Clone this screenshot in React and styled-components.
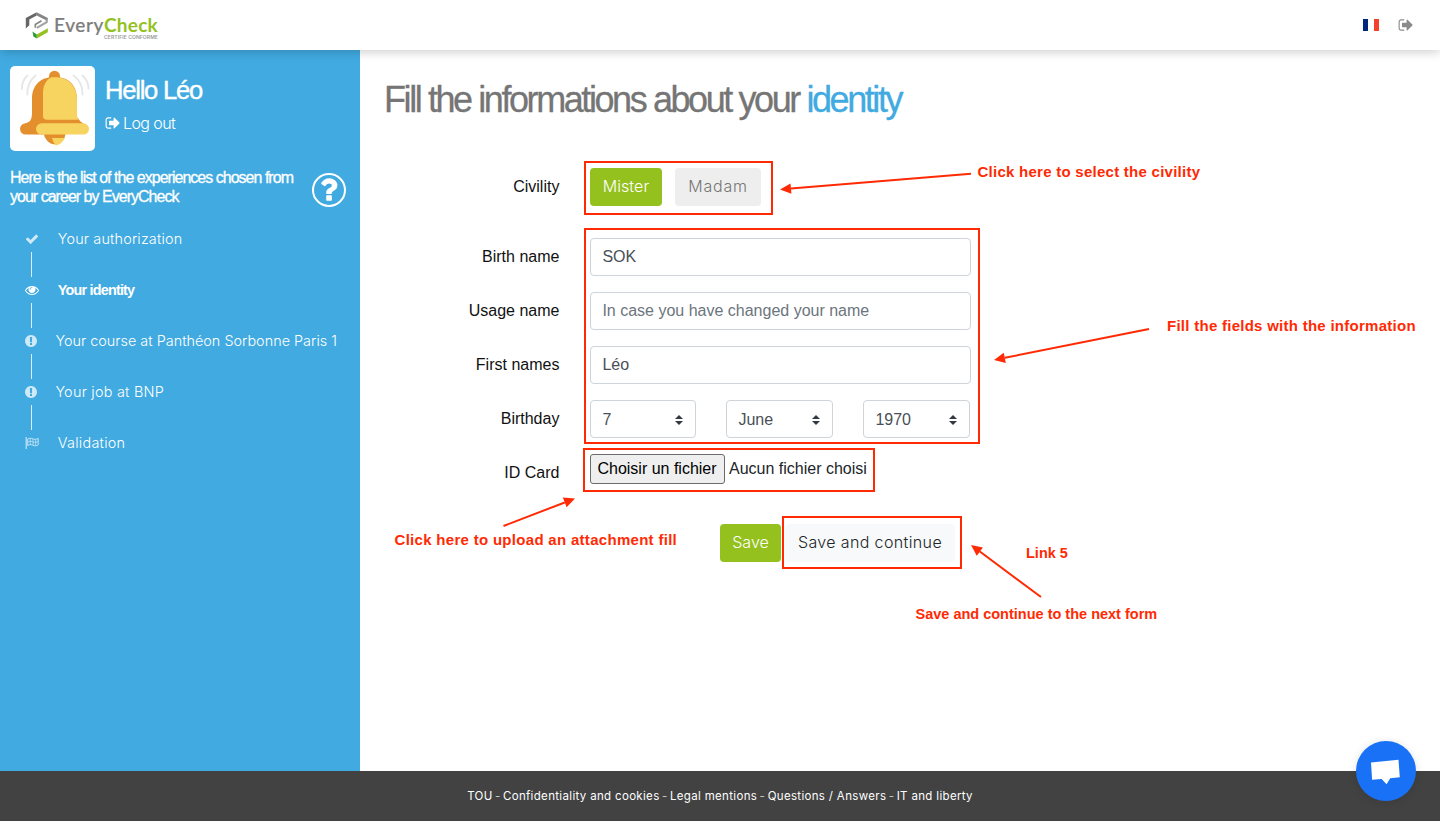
import React from 'react';
import styled, { createGlobalStyle, css } from 'styled-components';

const geo = '"Inter", "Lato", sans-serif';
const helv = '"Liberation Sans", Arial, sans-serif';
const RED = '#ff2a04';

const GlobalStyle = createGlobalStyle`
  *, *::before, *::after { box-sizing: border-box; }
  body { margin: 0; font-family: ${helv}; font-size: 16px; line-height: 1.5; color: #212529; background: #fff; }
  h1, h2, p, ul { margin: 0; padding: 0; }
`;

const Page = styled.div`
  position: relative;
  display: flex;
  flex-direction: column;
  width: 1440px;
  height: 821px;
  overflow: hidden;
`;

const Header = styled.header`
  position: relative;
  z-index: 2;
  flex: 0 0 50px;
  display: flex;
  align-items: center;
  justify-content: space-between;
  padding: 0 26px 0 25px;
  background: #fff;
  box-shadow: 0 2px 10px rgba(0, 0, 0, 0.2);
`;

const Logo = styled.div`
  display: flex;
  gap: 6px;
  padding-top: 1px;
`;

const LogoText = styled.div`
  display: flex;
  flex-direction: column;
  padding-top: 3px;
`;

const LogoName = styled.span`
  font: 500 19px/20px "Lato", sans-serif;
  letter-spacing: 0.6px;
  color: #7d7d7d;
  -webkit-text-stroke: 0.2px #7d7d7d;
  white-space: nowrap;
  b {
    font-weight: 700;
    letter-spacing: 0.25px;
    color: #95c11f;
    -webkit-text-stroke: 0;
  }
`;

const LogoTag = styled.span`
  font: 600 5px/5px ${geo};
  letter-spacing: 0.1px;
  margin-left: 50px;
  color: #9a9a9a;
  white-space: nowrap;
`;

const HeaderTools = styled.div`
  display: flex;
  align-items: center;
  gap: 19px;
  color: #8a8a8a;
`;

const Flag = styled.span`
  width: 16px;
  height: 12px;
  background: linear-gradient(90deg, #00267f 0 5px, #fff 5px 11px, #f3412e 11px);
`;

const Body = styled.div`
  flex: 1;
  display: flex;
`;

const Sidebar = styled.aside`
  width: 360px;
  padding: 16px 10px 0;
  background: #41aae1;
  color: #fff;
`;

const Profile = styled.div`
  display: flex;
  gap: 10px;
`;

const Avatar = styled.div`
  width: 85px;
  height: 85px;
  border-radius: 5px;
  background: #fff;
`;

const Greeting = styled.div`
  display: flex;
  flex-direction: column;
  padding-top: 8px;
`;

const Hello = styled.h2`
  font: 400 25.6px/32px ${helv};
  letter-spacing: -1.25px;
  -webkit-text-stroke: 0.4px #fff;
`;

const LogOut = styled.span`
  display: flex;
  align-items: center;
  gap: 2px;
  margin-top: 5px;
  font: 300 16px/24px ${geo};
  letter-spacing: -0.6px;
`;

const Intro = styled.div`
  display: flex;
  justify-content: space-between;
  margin-top: 17px;
  padding-right: 3px;
  svg { margin-top: 4px; }
`;

const IntroText = styled.p`
  font-size: 16px;
  line-height: 19px;
  letter-spacing: -0.98px;
  white-space: nowrap;
  -webkit-text-stroke: 0.3px #fff;
`;

const Steps = styled.ul`
  list-style: none;
  margin-top: 20px;
`;

const Step = styled.li`
  position: relative;
  display: flex;
  align-items: center;
  height: 22px;
  margin-bottom: 29px;
  padding-left: ${p => (p.$narrow ? 14 : 15)}px;
  font: 300 14.4px/22px ${geo};
  letter-spacing: ${p => p.$ls || 0}px;
  white-space: nowrap;
  svg { flex: none; opacity: 0.75; margin-right: ${p => (p.$narrow ? 17.4 : 18.8)}px; }
  ${p => p.$active && css`
    font-family: ${helv};
    font-weight: 700;
    svg { opacity: 1; }
  `}
  &:not(:last-child)::after {
    content: '';
    position: absolute;
    left: 21px;
    top: 24px;
    width: 1px;
    height: 25px;
    background: rgba(255, 255, 255, 0.8);
  }
`;

const Main = styled.main`
  flex: 1;
  padding: 28px 25px 0;
`;

const Title = styled.h1`
  margin-left: -1px;
  font: 400 36px/43px ${helv};
  letter-spacing: -2.42px;
  color: #757575;
  white-space: nowrap;
  -webkit-text-stroke: 0.3px currentColor;
  span { color: #41aae1; }
`;

const Form = styled.div`
  display: grid;
  row-gap: 16px;
  margin-top: 47px;
  width: 586px;
`;

const Row = styled.div`
  display: grid;
  grid-template-columns: 175px 381px;
  column-gap: 30px;
  height: 38px;
  margin-bottom: ${p => p.$after || 0}px;
`;

const Label = styled.label`
  padding-right: 0.6px;
  font-size: 16px;
  line-height: 37px;
  text-align: right;
  color: #111;
`;

const Controls = styled.div`
  display: flex;
  gap: ${p => p.$gap || 0}px;
  padding-right: 1px;
`;

const tones = {
  green: css`background: #95c11f; color: #fff;`,
  gray: css`background: #eee; color: #757575;`,
  light: css`background: #f8f9fa; color: #212529;`,
};

const Button = styled.button`
  width: ${p => p.$w}px;
  height: 38px;
  padding: 0 0 2px;
  border: 0;
  border-radius: 4px;
  font: 300 16px/36px ${geo};
  letter-spacing: ${p => p.$ls || 0}px;
  white-space: nowrap;
  ${p => tones[p.$tone]}
`;

const field = css`
  height: 38px;
  border: 1px solid #ced4da;
  border-radius: 4px;
  background: #fff;
  color: #495057;
  font: 400 16px/24px ${helv};
`;

const Input = styled.input`
  ${field}
  width: 381px;
  padding: 6px 11.4px;
  &::placeholder { color: #6c757d; opacity: 1; }
`;

const Select = styled.div`
  ${field}
  flex: ${p => p.$w ? `0 0 ${p.$w}px` : 1};
  display: flex;
  align-items: center;
  justify-content: space-between;
  padding: 1px 12px 0 11.4px;
`;

const FilePick = styled.div`
  display: flex;
  align-items: flex-start;
  gap: 4px;
  line-height: 30px;
  color: #212529;
  white-space: nowrap;
`;

const FileButton = styled.button`
  width: 135px;
  height: 30px;
  padding: 0 1px 0 0;
  border: 1px solid #6b6b6b;
  border-radius: 3px;
  background: #efefef;
  font: 400 16px/26px ${helv};
  color: #000;
`;

const Actions = styled.div`
  display: flex;
  gap: 4px;
  margin: 32px 0 0 335px;
`;

const Footer = styled.footer`
  flex: 0 0 50px;
  display: flex;
  align-items: center;
  justify-content: center;
  gap: 2.4px;
  background: #424242;
  color: #fff;
  font: 400 11.5px/20px ${geo};
  letter-spacing: 0.33px;
  i { font-style: normal; opacity: 0.7; }
`;

const Chat = styled.div`
  position: absolute;
  z-index: 3;
  right: 24px;
  bottom: 20px;
  width: 60px;
  height: 60px;
  border-radius: 50%;
  background: #1972f5;
  box-shadow: 0 1px 8px rgba(0, 0, 0, 0.12);
`;

const Overlay = styled.div`
  position: absolute;
  inset: 0;
  z-index: 4;
  pointer-events: none;
`;

const Frame = styled.div`
  position: absolute;
  left: ${p => p.$x}px;
  top: ${p => p.$y}px;
  width: ${p => p.$w}px;
  height: ${p => p.$h}px;
  border: 2px solid ${RED};
`;

const Note = styled.span`
  position: absolute;
  left: ${p => p.$x}px;
  top: ${p => p.$y}px;
  font: 700 ${p => p.$size || 15}px/18px ${helv};
  letter-spacing: ${p => p.$ls || 0}px;
  color: ${RED};
  white-space: nowrap;
`;

const Arrows = styled.svg`
  position: absolute;
  inset: 0;
`;

const paths = {
  signOut: 'M704 1440q0 4 1 20t.5 26.5-3 23.5-10 19.5-20.5 6.5h-320q-119 0-203.5-84.5t-84.5-203.5v-704q0-119 84.5-203.5t203.5-84.5h320q13 0 22.5 9.5t9.5 22.5q0 4 1 20t.5 26.5-3 23.5-10 19.5-20.5 6.5h-320q-66 0-113 47t-47 113v704q0 66 47 113t113 47h312l11.5 1 11.5 3 8 5.5 7 9 2 13.5zm928-544q0 26-19 45l-544 544q-19 19-45 19t-45-19-19-45v-288h-448q-26 0-45-19t-19-45v-384q0-26 19-45t45-19h448v-288q0-26 19-45t45-19 45 19l544 544q19 19 19 45z',
  check: 'M1671 566q0 40-28 68l-724 724-136 136q-28 28-68 28t-68-28l-136-136-362-362q-28-28-28-68t28-68l136-136q28-28 68-28t68 28l294 295 656-657q28-28 68-28t68 28l136 136q28 28 28 68z',
  eye: 'M1664 960q-152-236-381-353 61 104 61 225 0 185-131.5 316.5t-316.5 131.5-316.5-131.5-131.5-316.5q0-121 61-225-229 117-381 353 133 205 333.5 326.5t434.5 121.5 434.5-121.5 333.5-326.5zm-720-384q0-20-14-34t-34-14q-125 0-214.5 89.5t-89.5 214.5q0 20 14 34t34 14 34-14 14-34q0-86 61-147t147-61q20 0 34-14t14-34zm848 384q0 34-20 69-140 230-376.5 368.5t-499.5 138.5-499.5-139-376.5-368q-20-35-20-69t20-69q140-229 376.5-368t499.5-139 499.5 139 376.5 368q20 35 20 69z',
  alert: 'M896 128q209 0 385.5 103t279.5 279.5 103 385.5-103 385.5-279.5 279.5-385.5 103-385.5-103-279.5-279.5-103-385.5 103-385.5 279.5-279.5 385.5-103zm128 1247v-190q0-14-9-23.5t-22-9.5h-192q-13 0-23 10t-10 23v190q0 13 10 23t23 10h192q13 0 22-9.5t9-23.5zm-2-344l18-621q0-12-10-18-10-8-24-8h-220q-14 0-24 8-10 6-10 18l17 621q0 10 10 17.5t24 7.5h185q14 0 23.5-7.5t10.5-17.5z',
  question: 'M1088 1256v240q0 16-12 28t-28 12h-240q-16 0-28-12t-12-28v-240q0-16 12-28t28-12h240q16 0 28 12t12 28zm316-600q0 54-15.5 101t-35 76.5-55 59.5-57.5 43.5-61 35.5q-41 23-68.5 65t-27.5 67q0 17-12 32.5t-28 15.5h-240q-15 0-25.5-18.5t-10.5-37.5v-45q0-83 65-156.5t143-108.5q59-27 84-56t25-76q0-42-46.5-74t-107.5-32q-65 0-108 29-35 25-107 115-13 16-31 16-12 0-25-8l-164-125q-13-10-15.5-25t5.5-28q160-266 464-266 80 0 161 31t146 83 106 127.5 41 158.5z',
};

const Icon = ({ name, size = 14 }) => (
  <svg width={size} height={size} viewBox="0 0 1792 1792" fill="currentColor"><path d={paths[name]} /></svg>
);

const FlagIcon = () => (
  <svg width="14" height="14" viewBox="0 0 14 14" fill="none" stroke="currentColor">
    <path d="M1.2 1v12" strokeWidth="1.1" />
    <path d="M2.7 3.1c2-1.1 3.4-1 5.2-.2 1.9.8 3.4.5 5.3-.5v6.5c-1.9 1-3.4 1.2-5.3.3-1.8-.8-3.2-.8-5.2.3z" strokeWidth="0.9" />
    <path d="M2.7 6.1c2-1.1 3.4-1 5.2-.2 1.9.8 3.4.5 5.3-.5M5.3 2.300v6.5M8 3v6M10.7 3.400v6.200" strokeWidth="0.7" />
  </svg>
);

const LogoMark = () => (
  <svg width="23" height="27" viewBox="0 0 23 27">
    <path d="M.8 5.900 11.700.2v3.300L4.300 7.500v5.800L.8 16.500z" fill="#666" />
    <path d="M11.700.2 22.800 6v2.200L20.500 8 11.700 3.500z" fill="#858585" />
    <path d="M21.700 7.200v2.900L11.800 15.900" fill="none" stroke="#a3a3a3" strokeWidth="2.200" />
    <path d="M10.300 15.800v-3.300l6.200-3.700" fill="none" stroke="#858585" strokeWidth="1.600" />
    <path d="m7.500 19.500 4.300 3v3.900l-3.400-1.800z" fill="#2f9a3a" />
    <path d="M11.800 22.500 22.800 16.200v4L11.800 26.400z" fill="#95c11f" />
  </svg>
);

const Bell = () => (
  <svg width="85" height="85" viewBox="0 0 85 85">
    <g fill="none" stroke="#e6e6e6" strokeWidth="1.800" strokeLinecap="round">
      <path d="M17.500 9.500Q11.500 15 12 23M25.500 9.500Q17 16.500 17.300 28.500M72.500 9.500Q78.500 15 78.500 22.500M63.500 9.500Q73 16.500 72.500 28.500" />
    </g>
    <path d="M39 12V10.200a5.500 5.500 0 0 1 11 0V12z" fill="#e48f2e" />
    <path d="M33.500 66a11.300 13.700 0 0 0 22.500 0z" fill="#e48f2e" />
    <path d="M42 72h13q-4 7-9 7.500-3-2.500-4-7.500z" fill="#f7d460" />
    <path d="M22 48V33c0-13 8-21.700 20-21.700h5c12 0 20 9 20 21.700v18l3.500 4.500L74 58H15l5-3q2-3 2-7z" fill="#e48f2e" />
    <path d="M33 50V28c0-9 3.500-14.500 8.500-16.700h4C58 11.300 67 20 67 34v16q.3 3 1.500 3.800H37q-4 0-4-3.800z" fill="#f7d460" />
    <rect x="10" y="57.300" width="40" height="11.300" rx="5.600" fill="#e48f2e" />
    <rect x="26" y="57.300" width="53" height="11.300" rx="5.600" fill="#f7d460" />
  </svg>
);

const Caret = () => (
  <svg width="8" height="10" viewBox="0 0 4 5" fill="#343a40"><path d="M2 0 0 2h4zm0 5L0 3h4z" /></svg>
);

const Arrow = ({ from: [x1, y1], to: [x2, y2] }) => {
  const len = Math.hypot(x2 - x1, y2 - y1);
  const ux = (x2 - x1) / len;
  const uy = (y2 - y1) / len;
  const bx = x2 - ux * 11;
  const by = y2 - uy * 11;
  return (
    <g>
      <line x1={x1} y1={y1} x2={bx} y2={by} stroke={RED} strokeWidth="2" />
      <polygon points={`${x2},${y2} ${bx - uy * 5.2},${by + ux * 5.2} ${bx + uy * 5.2},${by - ux * 5.2}`} fill={RED} />
    </g>
  );
};

const links = ['TOU', 'Confidentiality and cookies', 'Legal mentions', 'Questions / Answers', 'IT and liberty'];

export default function App() {
  return (
    <Page>
      <GlobalStyle />
      <Header>
        <Logo>
          <LogoMark />
          <LogoText>
            <LogoName>Every<b>Check</b></LogoName>
            <LogoTag>CERTIFIE CONFORME</LogoTag>
          </LogoText>
        </Logo>
        <HeaderTools><Flag /><Icon name="signOut" size={16} /></HeaderTools>
      </Header>
      <Body>
        <Sidebar>
          <Profile>
            <Avatar><Bell /></Avatar>
            <Greeting>
              <Hello>Hello Léo</Hello>
              <LogOut><Icon name="signOut" size={16} />Log out</LogOut>
            </Greeting>
          </Profile>
          <Intro>
            <IntroText>Here is the list of the experiences chosen from<br />your career by EveryCheck</IntroText>
            <svg width="36" height="36" viewBox="0 0 36 36" fill="none">
              <circle cx="18" cy="18" r="16" stroke="#fff" strokeWidth="2" />
              <g transform="translate(1.700 1.800) scale(.0176)"><path d={paths.question} fill="#fff" /></g>
            </svg>
          </Intro>
          <Steps>
            <Step $ls={0.17}><Icon name="check" />Your authorization</Step>
            <Step $active $ls={-0.8}><Icon name="eye" />Your identity</Step>
            <Step $narrow $ls={0.02}><Icon name="alert" />Your course at Panthéon Sorbonne Paris 1</Step>
            <Step $narrow $ls={0.25}><Icon name="alert" />Your job at BNP</Step>
            <Step $ls={0.27}><FlagIcon />Validation</Step>
          </Steps>
        </Sidebar>
        <Main>
          <Title>Fill the informations about your <span>identity</span></Title>
          <Form>
            <Row $after={16}>
              <Label>Civility</Label>
              <Controls $gap={13}>
                <Button $tone="green" $w={72} $ls={0.1}>Mister</Button>
                <Button $tone="gray" $w={86} $ls={0.8}>Madam</Button>
              </Controls>
            </Row>
            <Row><Label>Birth name</Label><Input defaultValue="SOK" /></Row>
            <Row><Label>Usage name</Label><Input placeholder="In case you have changed your name" /></Row>
            <Row><Label>First names</Label><Input defaultValue="Léo" /></Row>
            <Row>
              <Label>Birthday</Label>
              <Controls $gap={30}>
                <Select $w={106}>7<Caret /></Select>
                <Select>June<Caret /></Select>
                <Select>1970<Caret /></Select>
              </Controls>
            </Row>
            <Row>
              <Label>ID Card</Label>
              <FilePick><FileButton>Choisir un fichier</FileButton>Aucun fichier choisi</FilePick>
            </Row>
          </Form>
          <Actions>
            <Button $tone="green" $w={61}>Save</Button>
            <Button $tone="light" $w={170} $ls={0.37}>Save and continue</Button>
          </Actions>
        </Main>
      </Body>
      <Footer>
        {links.map((l, i) => (
          <React.Fragment key={l}>{i > 0 && <i>-</i>}<span>{l}</span></React.Fragment>
        ))}
      </Footer>
      <Chat>
        <svg width="60" height="60" viewBox="0 0 60 60"><path d="m15 21.500 27.500-2.700 1.300 17.500-9.600.9-3.600 6-5-5.200-9.500.8z" fill="#fff" /></svg>
      </Chat>
      <Overlay>
        <Frame $x={584} $y={161} $w={189} $h={54} />
        <Frame $x={584} $y={228} $w={396} $h={216} />
        <Frame $x={583} $y={448} $w={292} $h={44} />
        <Frame $x={782} $y={516} $w={180} $h={53} />
        <Arrows width="1440" height="821">
          <Arrow from={[971, 173.7]} to={[780, 189.5]} />
          <Arrow from={[1149, 329]} to={[994, 360]} />
          <Arrow from={[503.5, 526]} to={[575, 498.5]} />
          <Arrow from={[1041, 597]} to={[971, 545]} />
        </Arrows>
        <Note $x={977.5} $y={163} $ls={0.26}>Click here to select the civility</Note>
        <Note $x={1167} $y={317} $ls={0.27}>Fill the fields with the information</Note>
        <Note $x={394.5} $y={531} $ls={0.3}>Click here to upload an attachment fill</Note>
        <Note $x={1026} $y={544} $size={14.5}>Link 5</Note>
        <Note $x={915.5} $y={605} $size={14.5}>Save and continue to the next form</Note>
      </Overlay>
    </Page>
  );
}
